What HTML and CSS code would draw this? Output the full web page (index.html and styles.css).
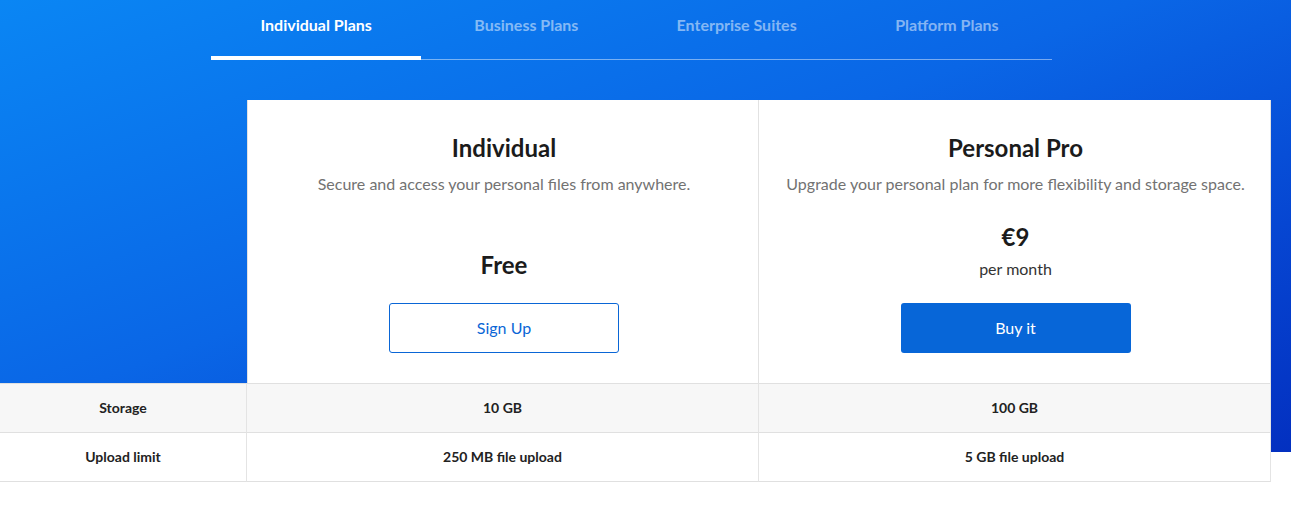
FILE: index.html
```html
<!DOCTYPE html>
<html lang="en">
<head>
<meta charset="utf-8">
<title>Plans</title>
<link rel="stylesheet" href="styles.css">
</head>
<body>
<div class="page">
  <nav class="tabs">
    <a class="tab active">Individual Plans</a>
    <a class="tab">Business Plans</a>
    <a class="tab">Enterprise Suites</a>
    <a class="tab">Platform Plans</a>
  </nav>
  <div class="table">
    <div class="cell blank"></div>
    <div class="cell plan plan-first">
      <h2 class="plan-title">Individual</h2>
      <p class="plan-desc">Secure and access your personal files from anywhere.</p>
      <div class="price">
        <div class="amount">Free</div>
      </div>
      <a class="btn btn-outline">Sign Up</a>
    </div>
    <div class="cell plan">
      <h2 class="plan-title">Personal Pro</h2>
      <p class="plan-desc">Upgrade your personal plan for more flexibility and storage space.</p>
      <div class="price">
        <div class="amount">€9</div>
        <div class="period">per month</div>
      </div>
      <a class="btn btn-solid">Buy it</a>
    </div>

    <div class="cell feature label grey">Storage</div>
    <div class="cell feature grey">10 GB</div>
    <div class="cell feature grey last">100 GB</div>

    <div class="cell feature label">Upload limit</div>
    <div class="cell feature">250 MB file upload</div>
    <div class="cell feature last">5 GB file upload</div>
  </div>
</div>
</body>
</html>
```

FILE: styles.css
```css
* { box-sizing: border-box; }
html, body { margin: 0; padding: 0; }
body {
  font-family: Lato, "Open Sans", "Liberation Sans", sans-serif;
  background: #fff;
  color: #222;
}
.page {
  width: 1291px;
  min-height: 506px;
  background-image: linear-gradient(160deg, #0a86f4 0%, #0a66e6 45%, #0646d2 75%, #0330c0 100%);
  background-size: 1291px 452px;
  background-repeat: no-repeat;
}
.tabs {
  display: flex;
  width: 841px;
  margin-left: 211px;
  height: 60px;
  border-bottom: 1px solid rgba(255,255,255,0.45);
}
.tab {
  flex: 1;
  display: flex;
  justify-content: center;
  padding-top: 15px;
  font-size: 16px;
  font-weight: 700;
  color: rgba(255,255,255,0.5);
  position: relative;
}
.tab.active { color: #fff; }
.tab.active::after {
  content: "";
  position: absolute;
  left: 0; right: 0; bottom: -1px;
  height: 4px;
  background: #fff;
}
.table {
  display: grid;
  grid-template-columns: 247px 512px 512px;
  grid-template-rows: 283px 49px 50px;
  width: 1271px;
  margin-top: 40px;
}
.cell.blank { background: transparent; }
.plan {
  background: #fff;
  border-right: 1px solid #e2e2e2;
  display: flex;
  flex-direction: column;
  align-items: center;
  padding: 33px 19px 30px 21px;
}
.plan-first { border-left: 1px solid #e2e2e2; }
.plan-title {
  margin: 0;
  font-size: 24px;
  line-height: 30px;
  font-weight: 700;
  color: #1b1b1b;
}
.plan-desc {
  margin: 10px 0 0;
  font-size: 16px;
  line-height: 22px;
  color: #727272;
}
.price {
  margin-top: auto;
  display: flex;
  flex-direction: column;
  align-items: center;
}
.amount {
  font-size: 24px;
  line-height: 30px;
  font-weight: 700;
  color: #1b1b1b;
}
.period {
  margin-top: 6px;
  font-size: 16px;
  line-height: 22px;
  color: #333;
}
.btn {
  margin-top: 23px;
  width: 230px;
  height: 50px;
  padding-bottom: 2px;
  display: flex;
  align-items: center;
  justify-content: center;
  font-size: 16px;
  border-radius: 3px;
}
.btn-outline {
  border: 1px solid #0a66d6;
  color: #0a66d6;
  background: #fff;
}
.btn-solid {
  background: #0766d8;
  color: #fff;
}
.feature {
  display: flex;
  align-items: center;
  justify-content: center;
  padding-bottom: 2px;
  font-size: 14px;
  font-weight: 700;
  color: #222;
  background: #fff;
  border-top: 1px solid #e0e0e0;
  border-right: 1px solid #e4e4e4;
}
.feature.grey { background: #f7f7f7; }
.table .feature:nth-last-child(-n+3) { border-bottom: 1px solid #e0e0e0; }
```
